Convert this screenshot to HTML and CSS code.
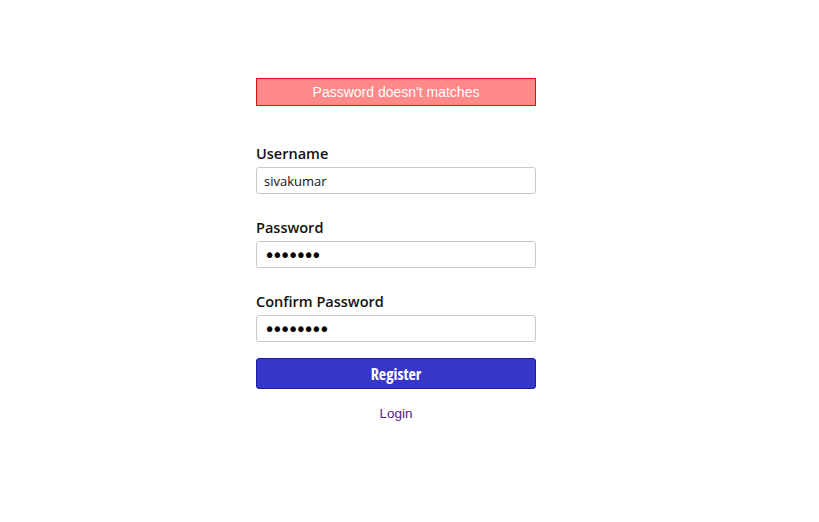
FILE: index.html
```html
<!DOCTYPE html>
<html>
<head>
<meta charset="utf-8">
<link rel="stylesheet" href="styles.css">
</head>
<body>
<div class="wrap">
  <div class="error">Password doesn't matches</div>
  <form class="form">
    <label class="label">Username</label>
    <input class="input" type="text" value="sivakumar">
    <label class="label">Password</label>
    <input class="input pw" type="password" value="1234567">
    <label class="label">Confirm Password</label>
    <input class="input pw last" type="password" value="12345678">
    <button class="btn" type="button">Register</button>
    <a class="login" href="#">Login</a>
  </form>
</div>
</body>
</html>
```
FILE: styles.css
```css
html, body { margin: 0; background: #fff; }
.wrap { width: 280px; margin: 78px 0 0 256px; }
.error {
  box-sizing: border-box; height: 28px; background: #ff8888; border: 1px solid #dd1111;
  color: #fff; font: 14px "Liberation Sans", Arial, sans-serif; text-align: center; line-height: 26px;
}
.form { display: flex; flex-direction: column; margin-top: 39px; }
.label { font: 600 14.5px/18px "Open Sans", sans-serif; color: #111; margin-bottom: 4px; }
.input {
  box-sizing: border-box; height: 27px; border: 1px solid #c8c8c8; border-radius: 3px;
  padding: 0 7px; font: 13px "Open Sans", sans-serif; color: #111; margin-bottom: 25px; outline: none;
}
.input.pw { font-family: "DejaVu Sans", sans-serif; font-size: 19px; letter-spacing: -3.4px; color: #000; }
.input.last { margin-bottom: 16px; }
.btn {
  box-sizing: border-box; height: 31px; background: #3636c9; border: 1px solid #1c1ca8; border-radius: 3px;
  color: #fff; font: 700 16px "Liberation Sans Narrow", "Open Sans", sans-serif; font-stretch: condensed; letter-spacing: 0; cursor: pointer;
}
.login {
  align-self: center; margin-top: 17px; font: 13.5px/16px "Liberation Sans", Arial, sans-serif; color: #551a8b; text-decoration: none;
}
```
